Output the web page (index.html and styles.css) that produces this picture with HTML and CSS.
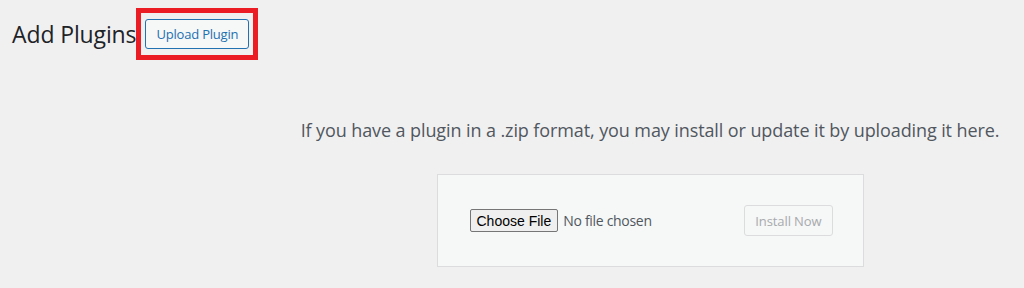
FILE: index.html
```html
<!DOCTYPE html>
<html lang="en">
<head>
<meta charset="utf-8">
<title>Add Plugins</title>
<link rel="stylesheet" href="styles.css">
</head>
<body>
<div class="page">
  <div class="page-header">
    <h1 class="page-title">Add Plugins</h1>
    <div class="highlight">
      <button class="btn-upload" type="button">Upload Plugin</button>
    </div>
  </div>
  <div class="upload-plugin">
    <p class="install-help">If you have a plugin in a .zip format, you may install or update it by uploading it here.</p>
    <form class="upload-form">
      <input class="file-input" type="file" name="pluginzip">
      <button class="btn-install" type="button" disabled>Install Now</button>
    </form>
  </div>
</div>
</body>
</html>
```

FILE: styles.css
```css
html, body {
  margin: 0;
  padding: 0;
  overflow: hidden;
}
body {
  background: #f0f0f1;
  font-family: "Open Sans", "Noto Sans", sans-serif;
  color: #3c434a;
}
.page {
  width: 1024px;
}
.page-header {
  display: flex;
  align-items: center;
  gap: 0;
  padding: 8px 0 0 12px;
}
.page-title {
  margin: 0;
  font-size: 23px;
  font-weight: 400;
  line-height: 30px;
  color: #1d2327;
  letter-spacing: -0.12px;
}
.highlight {
  border: 5px solid #ec1c24;
  padding: 6px 4px;
  display: flex;
}
.btn-upload {
  font-family: inherit;
  font-size: 13px;
  height: 30px;
  padding: 0 10px;
  color: #2271b1;
  background: #f6f7f7;
  border: 1px solid #2271b1;
  border-radius: 3px;
  letter-spacing: -0.2px;
}
.upload-plugin {
  text-align: center;
  padding: 57px 0 0 276px;
}
.install-help {
  margin: 0;
  font-size: 18px;
  line-height: 27px;
  color: #50575e;
  letter-spacing: -0.1px;
  white-space: nowrap;
}
.upload-form {
  display: inline-flex;
  align-items: center;
  justify-content: space-between;
  box-sizing: border-box;
  width: 427px;
  margin: 30px 0;
  padding: 30px;
  background: #f6f7f7;
  border: 1px solid #dcdcde;
}
.file-input {
  font-family: "Open Sans", sans-serif;
  font-size: 14px;
  color: #50575e;
  letter-spacing: -0.3px;
}
.file-input::file-selector-button {
  font-family: "Liberation Sans", Arial, sans-serif;
  font-size: 14px;
  letter-spacing: 0;
  color: #000;
  height: 23px;
  padding: 0 6px;
  margin: 0 5px 0 2px;
  background: #efefef;
  border: 1px solid #767676;
  border-radius: 2px;
}
.btn-install {
  font-family: inherit;
  font-size: 13px;
  height: 31px;
  padding: 0 10px;
  color: #a7aaad;
  background: #f6f7f7;
  border: 1px solid #dcdcde;
  border-radius: 3px;
  letter-spacing: -0.1px;
}
```
